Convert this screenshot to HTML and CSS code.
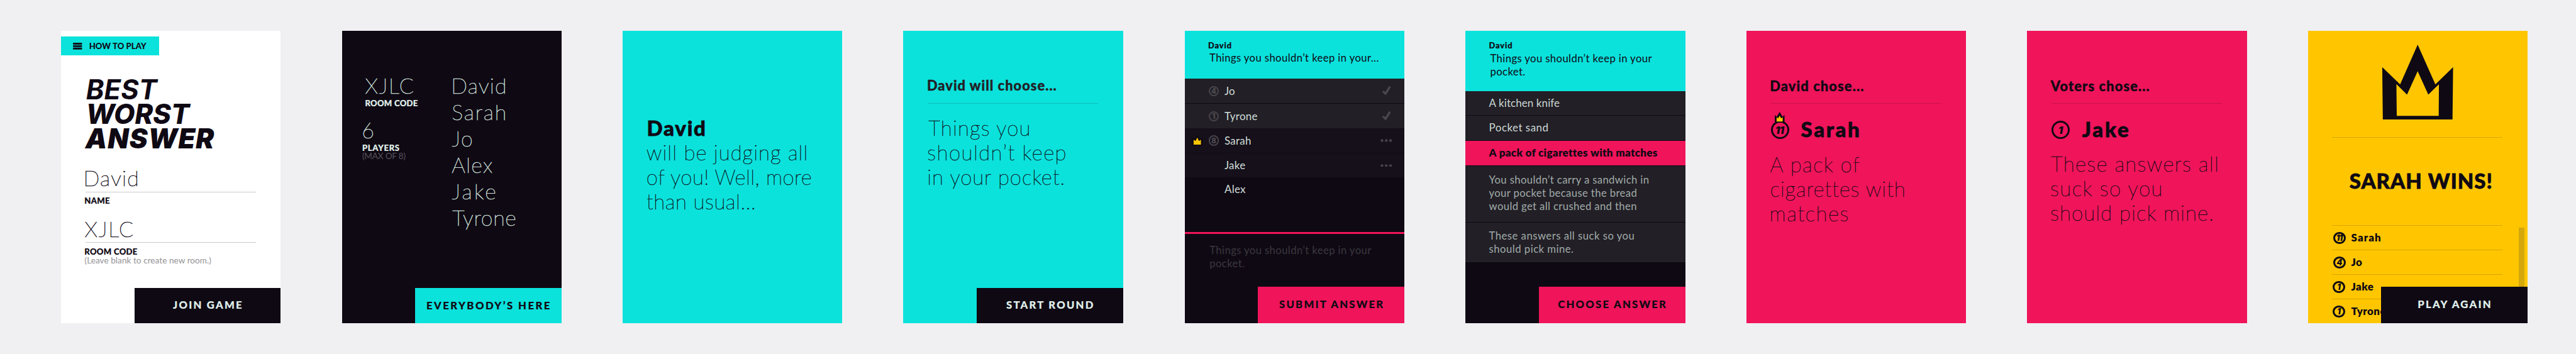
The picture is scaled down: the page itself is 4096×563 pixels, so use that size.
FILE: index.html
```
<!DOCTYPE html>
<html lang="en">
<head>
<meta charset="utf-8">
<title>Best Worst Answer</title>
<link rel="stylesheet" href="styles.css">
</head>
<body>
<main class="board">

  <section class="card card-join">
    <div class="tag">
      <svg class="menu" viewBox="0 0 15 11"><rect width="15" height="3" rx="1"/><rect y="4" width="15" height="3" rx="1"/><rect y="8" width="15" height="3" rx="1"/></svg>
      <span>HOW TO PLAY</span>
    </div>
    <h1 class="logo"><span>BEST</span><span>WORST</span><span>ANSWER</span></h1>
    <div class="field"><span class="thin david">David</span></div>
    <div class="label">NAME</div>
    <div class="field second"><span class="thin code">XJLC</span></div>
    <div class="label">ROOM CODE</div>
    <div class="note">(Leave blank to create new room.)</div>
    <div class="btn dark">JOIN GAME</div>
  </section>

  <section class="card card-lobby">
    <div class="lobby">
      <div class="info">
        <div class="thin code">XJLC</div>
        <div class="label">ROOM CODE</div>
        <div class="players">
          <div class="thin">6</div>
          <div class="label">PLAYERS</div>
          <div class="note">(MAX OF 8)</div>
        </div>
      </div>
      <div class="names thin">
        <span class="david">David</span><span class="n2">Sarah</span><span class="n3">Jo</span><span class="n4">Alex</span><span class="n5">Jake</span><span class="n6">Tyrone</span>
      </div>
    </div>
    <div class="btn cyan tall-name">EVERYBODY’S HERE</div>
  </section>

  <section class="card bg-cyan card-judge">
    <div class="big">David</div>
    <div class="copy judge"><span>will be judging all</span><span>of you! Well, more</span><span>than usual...</span></div>
  </section>

  <section class="card bg-cyan card-prompt">
    <h2 class="head soft">David will choose...</h2>
    <div class="copy prompt"><span>Things you</span><span>shouldn’t keep</span><span>in your pocket.</span></div>
    <div class="btn dark">START ROUND</div>
  </section>

  <section class="card bg-ink shift card-answer">
    <header class="ask">
      <div class="who">David</div>
      <div class="text">Things you shouldn’t keep in your...</div>
    </header>
    <div class="rows">
      <div class="row done"><span class="badge sm">4</span><span class="player jo">Jo</span><svg class="check" viewBox="0 0 14 15"><path d="M2 9.2 5.2 12.6 11.8 2"/></svg></div>
      <div class="row done"><span class="badge sm">1</span><span class="player">Tyrone</span><svg class="check" viewBox="0 0 14 15"><path d="M2 9.2 5.2 12.6 11.8 2"/></svg></div>
      <div class="row wait"><svg class="leader" viewBox="0 0 18 18"><path class="halo" d="M0 5 4 8 9 0 14 8 18 5V18H0Z"/><path class="gold" d="M3 8.4 6.2 10.6 9 5 11.8 10.6 15 8.4V16.6H3Z"/></svg><span class="badge sm">8</span><span class="player">Sarah</span><svg class="dots" viewBox="0 0 19 5"><circle cx="2.5" cy="2.5" r="2.3"/><circle cx="9.5" cy="2.5" r="2.3"/><circle cx="16.5" cy="2.5" r="2.3"/></svg></div>
      <div class="row wait"><span class="player bare">Jake</span><svg class="dots" viewBox="0 0 19 5"><circle cx="2.5" cy="2.5" r="2.3"/><circle cx="9.5" cy="2.5" r="2.3"/><circle cx="16.5" cy="2.5" r="2.3"/></svg></div>
      <div class="row idle"><span class="player bare">Alex</span></div>
    </div>
    <div class="compose">Things you shouldn’t keep in your<br>pocket.</div>
    <div class="btn pink">SUBMIT ANSWER</div>
  </section>

  <section class="card bg-ink card-pick">
    <header class="ask full">
      <div class="who">David</div>
      <div class="text">Things you shouldn’t keep in your<br>pocket.</div>
    </header>
    <div class="answers">
      <div class="answer one">A kitchen knife</div>
      <div class="answer one wide">Pocket sand</div>
      <div class="answer one picked">A pack of cigarettes with matches</div>
      <div class="answer long">You shouldn’t carry a sandwich in<br>your pocket because the bread<br>would get all crushed and then</div>
      <div class="answer last">These answers all suck so you<br>should pick mine.</div>
    </div>
    <div class="btn pink">CHOOSE ANSWER</div>
  </section>

  <section class="card bg-pink">
    <h2 class="head">David chose...</h2>
    <div class="winner"><span class="badge lg">11<svg class="crown" viewBox="0 0 16 17"><path class="ink" d="M0 5 3 8 8 0 13 8 16 5V17H0Z"/><path class="gold" d="M3 8.7 5.5 10.6 8 6.2 10.5 10.6 13 8.7V15.6H3Z"/></svg></span><span class="big sarah">Sarah</span></div>
    <div class="copy pack"><span>A pack of</span><span>cigarettes with</span><span>matches</span></div>
  </section>

  <section class="card bg-pink">
    <h2 class="head voters">Voters chose...</h2>
    <div class="winner"><span class="badge lg">1</span><span class="big jake">Jake</span></div>
    <div class="copy suck"><span>These answers all</span><span>suck so you</span><span>should pick mine.</span></div>
  </section>

  <section class="card bg-gold card-final">
    <svg class="trophy" viewBox="0 0 120 127"><path fill-rule="evenodd" d="M0 38 30.3 67.3 60 0 90 67.3 120 38 119 127H1ZM24 66.7 24.6 120.7H95.6L96 67 78 84.7 60 45 42 84.7Z"/></svg>
    <hr class="rule">
    <div class="wins">SARAH WINS!</div>
    <div class="scores">
      <div class="score"><span class="badge md">11</span><span class="s1">Sarah</span></div>
      <div class="score"><span class="badge md">4</span><span>Jo</span></div>
      <div class="score"><span class="badge md nudge">1</span><span>Jake</span></div>
      <div class="score"><span class="badge md nudge">1</span><span>Tyrone</span></div>
    </div>
    <div class="scrollbar"></div>
    <div class="btn dark over">PLAY AGAIN</div>
  </section>

</main>
</body>
</html>
```
FILE: styles.css
```
:root {
  --ink: #0f0914;
  --cyan: #0be2dc;
  --pink: #f0145a;
  --gold: #ffc600;
  --mint: #e0f0eb;
  --panel: #221f26;
}

* { box-sizing: border-box; margin: 0; padding: 0; }

html { zoom: 0.970616; }

body {
  background: #f0f0f3;
  color: var(--ink);
  font-family: Lato, "Liberation Sans", sans-serif;
  overflow: hidden;
}

.board {
  display: flex;
  gap: 100px;
  width: 4220px;
  height: 580px;
  padding: 50px 0 50px 100px;
}

.card {
  position: relative;
  display: flex;
  flex-direction: column;
  flex: none;
  width: 360px;
  height: 480px;
  overflow: hidden;
  background: #fff;
}

.shift { margin-left: 1px; }
.bg-cyan { background: var(--cyan); }
.bg-pink { background: var(--pink); }
.bg-ink { background: var(--ink); }
.bg-gold { background: var(--gold); }

.btn {
  align-self: flex-end;
  margin-top: auto;
  width: 240px;
  height: 58px;
  padding-left: 2px;
  font-size: 17.2px;
  font-weight: 900;
  line-height: 57px;
  letter-spacing: 2.3px;
  text-align: center;
  white-space: nowrap;
  -webkit-text-stroke: 0.2px currentColor;
}

.dark { background: var(--ink); color: var(--mint); }
.cyan { background: var(--cyan); }
.pink { background: var(--pink); height: 60px; line-height: 59px; }
.tall-name { letter-spacing: 2.55px; line-height: 59px; }

.thin {
  font-size: 35px;
  font-weight: 100;
  line-height: 44px;
  -webkit-text-stroke: 0.65px currentColor;
}

.david { letter-spacing: 1.3px; margin-left: -2px; }
.code { letter-spacing: 1.7px; }

.label {
  font-size: 13.5px;
  font-weight: 900;
  line-height: 14px;
  letter-spacing: 0.3px;
  -webkit-text-stroke: 0.25px currentColor;
}

.note {
  font-size: 14px;
  line-height: 14px;
  letter-spacing: 0.05px;
  color: #949396;
}

/* Join screen */
.tag {
  display: flex;
  align-items: center;
  gap: 11px;
  width: 161px;
  height: 31px;
  margin-top: 10px;
  padding-left: 20px;
  background: var(--cyan);
  font-size: 13.5px;
  font-weight: 900;
  letter-spacing: 0.07px;
}
.menu { width: 15px; height: 11px; fill: var(--ink); }

.logo {
  display: flex;
  flex-direction: column;
  margin: 36px 0 0 40px;
  font: italic 900 44.7px/40px Inter, sans-serif;
  letter-spacing: 1px;
}
.logo span:nth-child(1) { margin-left: 1px; font-weight: 750; letter-spacing: 0.1px; }
.logo span:nth-child(2) { margin-left: 0.8px; font-weight: 820; letter-spacing: 0; }

.field {
  width: 279px;
  height: 45px;
  margin: 23px 0 0 40px;
  border-bottom: 1px solid #cbcacc;
}
.field .thin { display: block; }
.field .david { margin-left: -3.5px; }
.field .code { margin-left: -1.3px; }
.field.second { margin-top: 16px; }
.card-join .label { margin: 8px 0 0 38.4px; }
.card-join .note { margin-left: 38.6px; }

/* Lobby screen */
.card-lobby { background: var(--ink); color: var(--mint); }
.card-lobby .thin { color: #d2e1dc; }
.card-lobby .cyan { color: var(--ink); }
.lobby {
  display: grid;
  grid-template-columns: 142px 1fr;
  padding: 68.5px 0 0 38px;
}
.players { margin: 15px 0 0 -4.6px; }
.players .thin { margin-left: -0.8px; }
.players .label { letter-spacing: 0.7px; }
.players .note { color: #55525a; letter-spacing: -0.2px; }
.names { display: flex; flex-direction: column; line-height: 43.2px; }
.names .david { margin-left: -1px; }
.n2 { letter-spacing: 1.9px; }
.n3 { letter-spacing: 1.7px; }
.n4 { letter-spacing: 1.3px; }
.n5 { letter-spacing: 3.4px; }
.n6 { letter-spacing: 0.75px; margin-left: 1px; }

/* Big statements */
.big {
  font-size: 34px;
  font-weight: 900;
  line-height: 40px;
  letter-spacing: 1.9px;
  -webkit-text-stroke: 0.8px currentColor;
}
.copy {
  display: flex;
  flex-direction: column;
  margin-left: 39px;
  font-size: 34px;
  font-weight: 100;
  line-height: 40px;
  letter-spacing: 1.1px;
  white-space: nowrap;
  -webkit-text-stroke: 0.5px currentColor;
}
.card-judge { padding-top: 139.8px; }
.card-judge .big { margin-left: 39.6px; }
.judge span:nth-child(1) { letter-spacing: 1.04px; }
.judge span:nth-child(2) { letter-spacing: 0.45px; }
.judge span:nth-child(3) { letter-spacing: 0.61px; }

.head {
  width: 279px;
  height: 120px;
  margin-left: 40px;
  padding-top: 75.6px;
  border-bottom: 1px solid rgba(15, 9, 20, 0.17);
  font-size: 22.5px;
  font-weight: 900;
  line-height: 30px;
  letter-spacing: 1.15px;
  text-indent: -1.3px;
  white-space: nowrap;
  -webkit-text-stroke: 0.4px currentColor;
}
.head.soft { color: #221f26; padding-top: 75px; letter-spacing: 1.05px; }
.head.voters { text-indent: -1.2px; }

.prompt { margin-top: 20px; }
.prompt span:nth-child(1) { margin-left: 2px; letter-spacing: 1.16px; }
.prompt span:nth-child(2) { letter-spacing: 1.5px; }
.prompt span:nth-child(3) { letter-spacing: 0.95px; }

.winner {
  display: flex;
  height: 40px;
  margin: 21.8px 0 0 40px;
}
.winner .sarah { margin-left: 19.5px; letter-spacing: 2.7px; }
.winner .jake { margin-left: 20.3px; letter-spacing: 2.9px; }

.pack { margin-top: 18px; }
.pack span:nth-child(1) { letter-spacing: 1.4px; }
.pack span:nth-child(2) { letter-spacing: 0.87px; }
.pack span:nth-child(3) { letter-spacing: 1.6px; margin-left: -1px; }
.suck { margin-top: 17px; }
.suck span:nth-child(1) { letter-spacing: 1.32px; }
.suck span:nth-child(2) { letter-spacing: 1.5px; margin-left: -1px; }
.suck span:nth-child(3) { letter-spacing: 1.15px; margin-left: -1px; }

/* Score badges */
.badge {
  position: relative;
  display: flex;
  flex: none;
  align-items: center;
  justify-content: center;
  border-radius: 50%;
  font-family: Inter, sans-serif;
  font-weight: 900;
}
.badge.sm {
  width: 17px;
  height: 17px;
  margin-top: 1px;
  border: 2.1px solid #47444a;
  color: #4c494f;
  font-size: 11.5px;
}
.badge.lg {
  width: 30px;
  height: 30px;
  margin-top: 6.2px;
  padding-right: 1px;
  border: 3.1px solid var(--ink);
  font-size: 17px;
  font-style: italic;
  letter-spacing: -0.6px;
}
.badge.md {
  width: 20px;
  height: 20px;
  margin: 10px 0 0 2px;
  padding-right: 1px;
  border: 3.1px solid var(--ink);
  font-size: 13px;
  font-style: italic;
  letter-spacing: -0.8px;
}
.badge.md.nudge { margin: 10px 1px 0 1px; }
.crown {
  position: absolute;
  left: 4px;
  top: -17.8px;
  width: 16px;
  height: 17px;
}
.ink { fill: var(--ink); }
.gold { fill: var(--gold); }

/* Answering screen */
.ask {
  height: 79px;
  padding: 17px 0 0 38.4px;
  background: var(--cyan);
  white-space: nowrap;
}
.ask.full { height: 99px; }
.who { font-size: 13.2px; font-weight: 900; line-height: 15px; letter-spacing: 0.9px; -webkit-text-stroke: 0.25px currentColor; }
.text {
  padding: 2.8px 0 0 2px;
  font-size: 17.2px;
  line-height: 21.6px;
  letter-spacing: 0.4px;
}
.full .text { padding-top: 3.8px; }

.rows { height: 251px; }
.row {
  position: relative;
  display: flex;
  align-items: center;
  height: 40px;
  padding: 0 22px 0 39px;
  color: #d0ddd9;
  font-size: 17.5px;
}
.row.done { background: var(--panel); }
.row.wait { background: #15101a; }
.row.done + .row.done, .row.wait + .row.wait { margin-top: 1px; }
.row.idle { height: 38px; }
.player { margin: 0 auto 0 9px; letter-spacing: 0.3px; }
.player.bare { margin-left: 26px; }
.check {
  width: 14px;
  height: 15px;
  fill: none;
  stroke: #4b484e;
  stroke-width: 3.4;
  stroke-linecap: round;
  stroke-linejoin: round;
}
.dots { width: 19px; height: 5px; margin-right: -2px; fill: #48424d; }
.leader { position: absolute; left: 12px; top: 11px; width: 18px; height: 18px; }
.halo { fill: #0f0914; }

.compose {
  padding: 16.6px 0 0 40.6px;
  border-top: 3.1px solid var(--pink);
  color: #3a373e;
  font-size: 17.2px;
  line-height: 21.6px;
  letter-spacing: 0.4px;
}

/* Choosing screen */
.answers { display: grid; gap: 1px; }
.answer {
  padding-left: 38.4px;
  background: var(--panel);
  color: #a0aba8;
  font-size: 17.2px;
  line-height: 21.5px;
  letter-spacing: 0.38px;
  white-space: nowrap;
}
.one { height: 40px; font-size: 17.5px; line-height: 40px; letter-spacing: 0.1px; color: #cbd8d4; }
.wide { letter-spacing: 0.5px; }
.picked { background: var(--pink); color: var(--ink); font-weight: 800; letter-spacing: 0.35px; }
.long { height: 92px; padding-top: 12.3px; }
.last { height: 65px; padding-top: 11px; letter-spacing: 0.5px; }

/* Final screen */
.trophy { width: 120px; height: 127px; margin: 23px 0 0 120px; fill: var(--ink); }
.rule {
  width: 279px;
  height: 1px;
  margin: 29px 0 0 40px;
  border: 0;
  background: rgba(15, 9, 20, 0.17);
}
.wins {
  margin: 50.5px 0 52.5px 68px;
  font-size: 34px;
  font-weight: 900;
  line-height: 40px;
  letter-spacing: 1.1px;
  -webkit-text-stroke: 0.8px currentColor;
}
.scores { width: 279px; margin-left: 40px; }
.score {
  display: flex;
  gap: 9px;
  height: 40.3px;
  border-top: 1px solid rgba(15, 9, 20, 0.17);
  font-size: 17.5px;
  font-weight: 800;
  line-height: 38.5px;
  letter-spacing: 0.4px;
}
.s1 { letter-spacing: 1.1px; }
.scrollbar {
  position: absolute;
  right: 5px;
  top: 323px;
  width: 10px;
  height: 120px;
  background: #d4a70b;
}
.over { position: absolute; right: 0; bottom: 0; height: 60px; line-height: 59px; }
```
